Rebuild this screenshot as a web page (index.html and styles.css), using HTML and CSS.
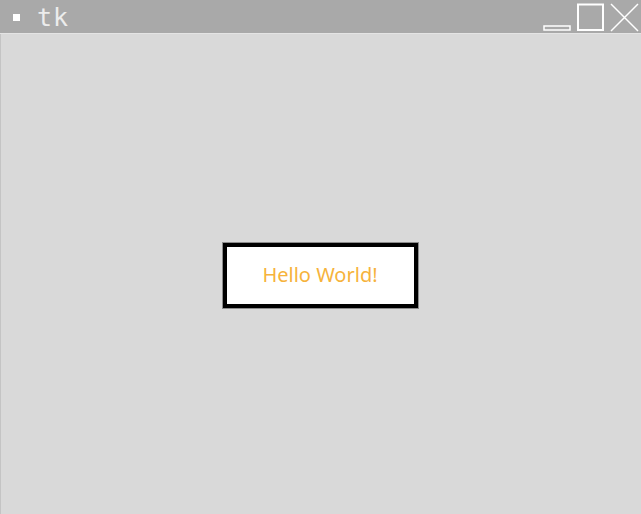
FILE: index.html
```html
<!DOCTYPE html>
<html>
<head>
<meta charset="utf-8">
<link rel="stylesheet" href="styles.css">
</head>
<body>
<div class="window">
  <div class="titlebar">
    <span class="app-icon"></span>
    <span class="title">tk</span>
    <div class="controls">
      <svg class="ctl" width="30" height="33" viewBox="0 0 30 33">
        <rect x="2" y="26" width="26" height="4" fill="none" stroke="#fff" stroke-width="1.5"/>
      </svg>
      <svg class="ctl" width="30" height="33" viewBox="0 0 30 33">
        <rect x="3" y="4.5" width="25" height="25.5" fill="none" stroke="#fff" stroke-width="2"/>
      </svg>
      <svg class="ctl" width="32" height="33" viewBox="0 0 32 33">
        <path d="M3 4 L30 31 M30 4 L3 31" stroke="#fff" stroke-width="1.5" fill="none"/>
      </svg>
    </div>
  </div>
  <div class="content">
    <div class="button">Hello World!</div>
  </div>
</div>
</body>
</html>
```
FILE: styles.css
```css
html, body {
  margin: 0;
  padding: 0;
}
body {
  width: 641px;
  height: 514px;
  overflow: hidden;
  background: #d9d9d9;
}
.window {
  display: flex;
  flex-direction: column;
  height: 514px;
}
.titlebar {
  height: 33px;
  background: #a9a9a9;
  border-bottom: 1px solid #e4e4e4;
  display: flex;
  align-items: center;
}
.app-icon {
  width: 7px;
  height: 7px;
  background: #ffffff;
  margin-left: 13px;
  margin-top: 1px;
}
.title {
  font-family: "DejaVu Sans Mono", monospace;
  font-size: 25px;
  color: #ececec;
  margin-left: 17px;
  margin-top: 2px;
  letter-spacing: 1px;
}
.controls {
  margin-left: auto;
  display: flex;
  align-self: flex-start;
  margin-right: 1px;
  gap: 3px;
}
.ctl {
  display: block;
}
.content {
  flex: 1;
  display: flex;
  align-items: center;
  justify-content: center;
  border-left: 1px solid #c4c4c4;
  padding-top: 2px;
}
.button {
  box-sizing: border-box;
  width: 195px;
  height: 65px;
  margin-right: 2px;
  border: 4px solid #000;
  box-shadow: 0 0 0 1px #8c8c8c;
  background: #ffffff;
  display: flex;
  align-items: center;
  justify-content: center;
  font-family: "Noto Sans", sans-serif;
  font-size: 20px;
  color: #f6b33c;
  padding-bottom: 2px;
}
```
